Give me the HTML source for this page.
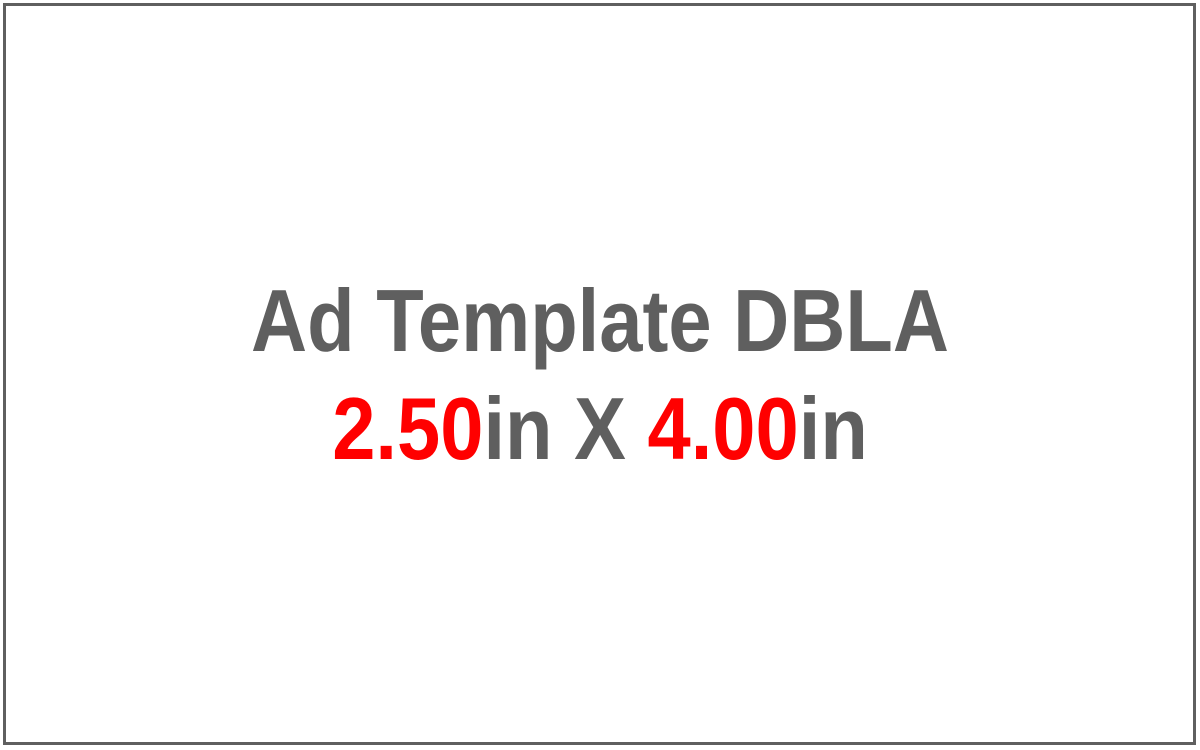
<!DOCTYPE html>
<html><head><style>
html,body{margin:0;padding:0;width:1200px;height:750px;background:#fff;overflow:hidden}
.box{position:absolute;left:3px;top:3px;width:1187px;height:736px;border:3px solid #5f5f5f}
.t{position:absolute;left:0;width:1200px;text-align:center;font-family:"Liberation Sans",sans-serif;font-weight:bold;color:#5f5f5f;font-size:88px;line-height:1;white-space:nowrap;transform:scaleX(0.883);transform-origin:600px 0}
.r{color:#ff0000}
</style></head><body>
<div class="box"></div>
<div class="t" style="top:277px">Ad Template DBLA</div>
<div class="t" style="top:385px"><span class="r">2.50</span>in X <span class="r">4.00</span>in</div>
</body></html>
